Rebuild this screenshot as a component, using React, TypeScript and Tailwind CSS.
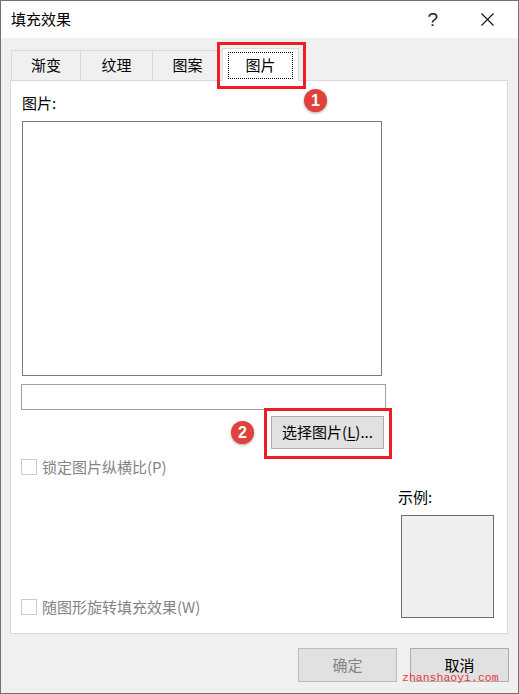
import React from "react";

const font = { fontFamily: '"Noto Sans CJK SC", "Noto Sans", sans-serif' };

function Tab({ label, w }: { label: string; w: number }) {
  return (
    <div
      className="h-[30px] border-t border-l border-[#d9d9d9] bg-[#f0f0f0] flex items-center justify-center text-[15px] text-black"
      style={{ width: w }}
    >
      {label}
    </div>
  );
}

function Badge({ n, className }: { n: string; className: string }) {
  return (
    <div
      className={
        "absolute w-[23px] h-[23px] rounded-full bg-[#e0413c] shadow-[0_1px_3px_rgba(0,0,0,0.35)] flex items-center justify-center text-white text-[16px] font-bold leading-none " +
        className
      }
      style={{ fontFamily: '"Liberation Sans", Arial, sans-serif' }}
    >
      {n}
    </div>
  );
}

function CheckRow({ label, className }: { label: string; className?: string }) {
  return (
    <div className={"flex items-center " + (className ?? "")}>
      <div className="w-[16px] h-[16px] border border-[#cccccc] bg-white" />
      <span className="ml-[5px] text-[15px] leading-[20px] text-[#838383]">{label}</span>
    </div>
  );
}

export default function App() {
  return (
    <div
      className="relative w-[519px] h-[694px] border border-[#707070] bg-[#f0f0f0] flex flex-col overflow-hidden"
      style={font}
    >
      {/* Title bar */}
      <div className="h-[37px] bg-white flex items-center shrink-0">
        <span className="ml-[10px] text-[15px] text-black">填充效果</span>
        <span
          className="ml-auto text-[19px] leading-none text-[#222]"
          style={{ fontFamily: '"Liberation Sans", Arial, sans-serif', marginRight: 43 }}
        >
          ?
        </span>
        <svg width="13" height="13" viewBox="0 0 13 13" className="mr-[24px]">
          <path d="M0.5 0.5 L12.5 12.5 M12.5 0.5 L0.5 12.5" stroke="#111" strokeWidth="1.1" />
        </svg>
      </div>

      {/* Body */}
      <div className="flex flex-col pl-[9px] pt-[10px]">
        {/* Tabs */}
        <div className="flex items-end h-[32px] pl-[1px]">
          <Tab label="渐变" w={69} />
          <Tab label="纹理" w={72} />
          <Tab label="图案" w={70} />
          <div className="relative z-10 -mb-[1px] h-[33px] w-[77px] border-t border-l border-r border-[#d9d9d9] bg-white flex items-stretch px-[5px] pt-[3px] pb-[2px]">
            <div className="flex-1 border border-dotted border-black flex items-center justify-center text-[15px] text-black">
              图片
            </div>
          </div>
        </div>

        {/* Panel */}
        <div className="w-[498px] h-[554px] border border-[#d9d9d9] bg-white flex flex-col">
          <div className="ml-[11px] mt-[12px] text-[15px] leading-[20px] text-black">图片:</div>
          <div className="ml-[11px] mt-[8px] w-[360px] h-[255px] border border-[#7a7a7a] bg-white" />
          <div className="ml-[10px] mt-[8px] w-[365px] h-[26px] border border-[#a0a0a0] bg-white" />
          <div className="ml-[260px] mt-[6px] w-[113px] h-[33px] border border-[#adadad] bg-[#e1e1e1] flex items-center justify-center text-[15px] text-black">
            选择图片(<span className="underline underline-offset-2">L</span>)...
          </div>
          <CheckRow label="锁定图片纵横比(P)" className="ml-[10px] mt-[10px] h-[16px]" />
          <div className="flex flex-1 items-end">
            <div className="flex-1 pl-[10px] pb-[18px]">
              <CheckRow label="随图形旋转填充效果(W)" className="h-[16px]" />
            </div>
            <div className="flex flex-col mr-[13px] mb-[15px]">
              <div className="text-[15px] leading-[20px] text-black">示例:</div>
              <div className="ml-[3px] mt-[8px] w-[93px] h-[103px] border border-[#6d6d6d] bg-[#efefef]" />
            </div>
          </div>
        </div>

        {/* Buttons */}
        <div className="flex justify-end gap-[13px] mt-[14px] w-[499px]">
          <div className="w-[99px] h-[34px] border border-[#bcbcbc] bg-[#e1e1e1] flex items-center justify-center text-[15px] text-[#838383]">
            确定
          </div>
          <div className="w-[99px] h-[34px] border border-[#adadad] bg-[#e1e1e1] flex items-center justify-center text-[15px] text-black">
            取消
          </div>
        </div>
      </div>

      {/* Annotations */}
      <div className="absolute left-[216px] top-[41px] w-[89px] h-[47px] border-[3px] border-[#ee1c25]" />
      <div className="absolute left-[263px] top-[407px] w-[128px] h-[51px] border-[3px] border-[#ee1c25]" />
      <Badge n="1" className="left-[303px] top-[88px]" />
      <Badge n="2" className="left-[230px] top-[420px]" />
      <div
        className="absolute left-[401px] top-[670px] text-[11.5px] leading-[14px] text-[#e8383d]"
        style={{ fontFamily: '"Liberation Mono", monospace' }}
      >
        zhanshaoyi.com
      </div>
    </div>
  );
}
